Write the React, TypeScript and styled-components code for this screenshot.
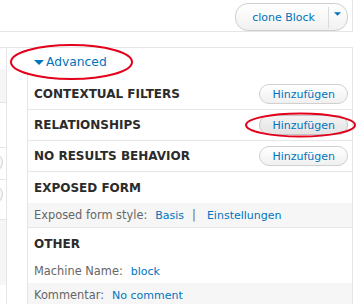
import React from 'react';
import styled, { createGlobalStyle } from 'styled-components';

const GlobalStyle = createGlobalStyle`
  body {
    margin: 0;
    background: #fff;
    font-family: "DejaVu Sans", Verdana, sans-serif;
  }
`;

const LINK = '#0074bd';
const LINE = '#e6e6e6';

interface Bucket {
  title: string;
  hovered?: boolean;
}

const buckets: Bucket[] = [
  { title: 'Contextual filters' },
  { title: 'Relationships', hovered: true },
  { title: 'No results behavior' },
];

export default function App() {
  return (
    <Page>
      <GlobalStyle />
      <TopBar>
        <SplitButton>
          <SplitMain>clone Block</SplitMain>
          <SplitDivider />
          <SplitCaret>
            <Caret size={7} />
          </SplitCaret>
        </SplitButton>
      </TopBar>

      <Columns>
        <SideColumn>
          <SideRow height={21} />
          <SideRow height={33} gray bordered />
          <SideRow height={44} bordered />
          <SideRow height={31} bordered>
            <PillEnd />
          </SideRow>
          <SideRow height={39} bordered>
            <PillEnd />
          </SideRow>
          <SideRow height={65} gray />
        </SideColumn>

        <AdvancedColumn>
          <Toggle>
            <Caret size={10} />
            <ToggleText>Advanced</ToggleText>
          </Toggle>
          <BucketBox>
            {buckets.map((b) => (
              <HeaderRow key={b.title} bordered>
                <Title>{b.title}</Title>
                <AddButton hovered={b.hovered}>Hinzufügen</AddButton>
              </HeaderRow>
            ))}
            <HeaderRow>
              <Title>Exposed form</Title>
            </HeaderRow>
            <InfoRow gray>
              <Label>Exposed form style:</Label>
              <Link>Basis</Link>
              <Pipe>|</Pipe>
              <Link>Einstellungen</Link>
            </InfoRow>
            <Section>
              <HeaderRow>
                <Title>Other</Title>
              </HeaderRow>
              <InfoRow>
                <Label>Machine Name:</Label>
                <Link>block</Link>
              </InfoRow>
              <InfoRow gray>
                <Label>Kommentar:</Label>
                <Link>No comment</Link>
              </InfoRow>
            </Section>
          </BucketBox>
        </AdvancedColumn>
      </Columns>

      <Marks width="360" height="304" viewBox="0 0 360 304">
        <ellipse cx="71.5" cy="62" rx="60.5" ry="17" />
        <ellipse cx="300.5" cy="125" rx="54.5" ry="11.5" />
      </Marks>
    </Page>
  );
}

function Caret({ size }: { size: number }) {
  return (
    <svg width={size} height={Math.round(size / 2)} viewBox="0 0 10 5">
      <polygon points="0,0 10,0 5,5" fill={LINK} />
    </svg>
  );
}

const Page = styled.div`
  position: relative;
  width: 360px;
  height: 304px;
  overflow: hidden;
`;

const TopBar = styled.div`
  width: 353px;
  height: 32px;
  box-sizing: border-box;
  border-bottom: 1px solid ${LINE};
  border-right: 1px solid ${LINE};
  display: flex;
  justify-content: flex-end;
  align-items: flex-start;
  padding: 3px 4px 0 0;
`;

const SplitButton = styled.div`
  display: flex;
  align-items: center;
  height: 28px;
  box-sizing: border-box;
  border: 1px solid #cfcfcf;
  border-radius: 13px;
  background: linear-gradient(#ffffff, #f1f1f1);
  font-size: 11px;
  color: ${LINK};
`;

const SplitMain = styled.span`
  padding: 0 13px 0 16px;
`;

const SplitDivider = styled.span`
  width: 1px;
  height: 21px;
  background: #dadada;
`;

const SplitCaret = styled.span`
  display: flex;
  align-items: center;
  padding: 0 6px 6px 5px;
`;

const Columns = styled.div`
  margin-top: 15px;
  width: 353px;
  box-sizing: border-box;
  border-top: 1px solid ${LINE};
  border-right: 1px solid ${LINE};
  display: flex;
  height: 260px;
`;

const SideColumn = styled.div`
  width: 7px;
  box-sizing: border-box;
  border-right: 1px solid ${LINE};
  overflow: hidden;
`;

const SideRow = styled.div<{ height: number; gray?: boolean; bordered?: boolean }>`
  height: ${(p) => p.height}px;
  background: ${(p) => (p.gray ? '#f6f6f6' : '#fff')};
  border-bottom: ${(p) => (p.bordered ? `1px solid ${LINE}` : 'none')};
  display: flex;
  align-items: flex-start;
`;

const PillEnd = styled.span`
  flex: none;
  width: 20px;
  height: 19px;
  margin: 5px 0 0 -17px;
  box-sizing: border-box;
  border: 1px solid #d0d0d0;
  border-radius: 10px;
  background: linear-gradient(#fff, #efefef);
`;

const AdvancedColumn = styled.div`
  flex: 1;
  margin-left: 20px;
  display: flex;
  flex-direction: column;
`;

const Toggle = styled.div`
  height: 24px;
  display: flex;
  align-items: center;
  gap: 2px;
  padding: 4px 0 0 7px;
  box-sizing: border-box;
  color: ${LINK};
  font-size: 12.3px;
  svg {
    margin-top: 1px;
  }
`;

const ToggleText = styled.span``;

const BucketBox = styled.div`
  flex: 1;
  border-left: 1px solid ${LINE};
  padding-top: 7px;
`;

const HeaderRow = styled.div<{ bordered?: boolean }>`
  height: 31px;
  box-sizing: border-box;
  border-bottom: ${(p) => (p.bordered ? `1px solid ${LINE}` : 'none')};
  display: flex;
  align-items: center;
  justify-content: space-between;
  padding: 0 4px 0 6px;
`;

const Title = styled.span`
  font-size: 12px;
  font-weight: bold;
  text-transform: uppercase;
  color: #2b2b2b;
`;

const AddButton = styled.span<{ hovered?: boolean }>`
  height: 20px;
  box-sizing: border-box;
  display: flex;
  align-items: center;
  padding: 0 12px;
  border: 1px solid ${(p) => (p.hovered ? '#c4c4c4' : '#d0d0d0')};
  border-radius: 10px;
  background: ${(p) =>
    p.hovered ? 'linear-gradient(#f3f3f3, #e4e4e4)' : 'linear-gradient(#ffffff, #f0f0f0)'};
  color: ${LINK};
  font-size: 11px;
`;

const InfoRow = styled.div<{ gray?: boolean }>`
  height: 24px;
  display: flex;
  align-items: center;
  padding-left: 6px;
  background: ${(p) => (p.gray ? '#f6f6f6' : '#fff')};
`;

const Label = styled.span`
  color: #666;
  font-size: 11.4px;
  margin-right: 8px;
`;

const Link = styled.span`
  color: ${LINK};
  font-size: 11px;
`;

const Pipe = styled.span`
  color: #666;
  font-size: 11.4px;
  margin: 0 11px 0 8px;
`;

const Section = styled.div`
  border-top: 1px solid ${LINE};
`;

const Marks = styled.svg`
  position: absolute;
  left: 0;
  top: 0;
  pointer-events: none;
  ellipse {
    fill: none;
    stroke: #e3001b;
    stroke-width: 2;
  }
`;
